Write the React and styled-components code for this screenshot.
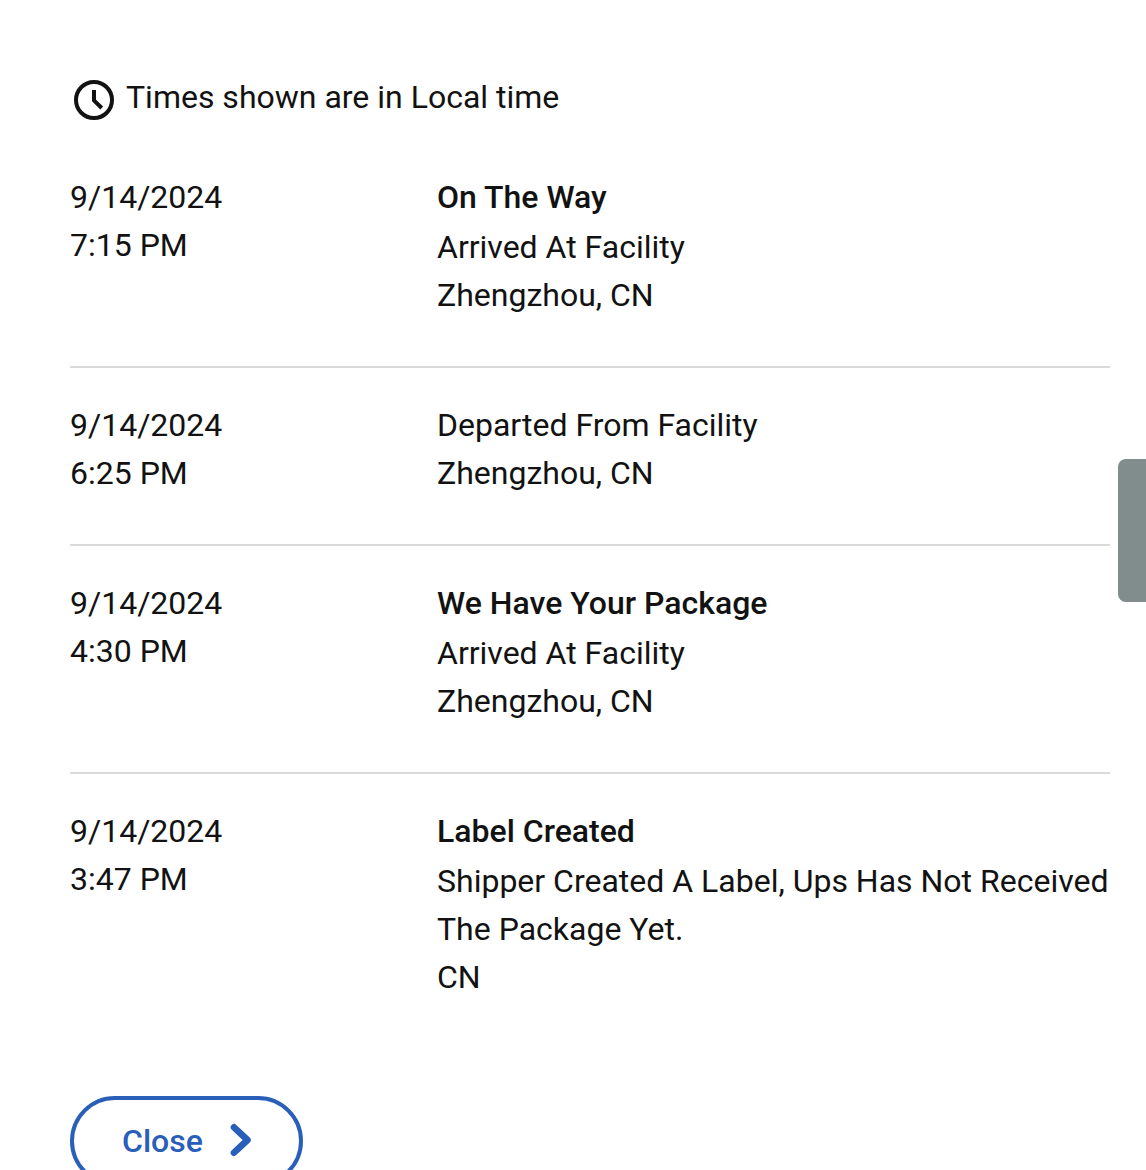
import React from "react";
import styled, { createGlobalStyle } from "styled-components";

const GlobalStyle = createGlobalStyle`
  *, *::before, *::after {
    box-sizing: border-box;
  }
  html, body {
    margin: 0;
    background: #fff;
    overflow: hidden;
  }
  body {
    color: #121212;
    font-family: Roboto, "Liberation Sans", sans-serif;
    font-size: 32px;
    line-height: 48px;
  }
`;

const Page = styled.main`
  padding: 70px 36px 0 70px;
`;

const TimeNote = styled.p`
  display: flex;
  align-items: center;
  gap: 8px;
  margin: 0 0 16px;
`;

const ClockIcon = styled.svg`
  flex: none;
  width: 48px;
  height: 48px;
  margin-top: 6px;
`;

const Table = styled.table`
  width: 100%;
  border-collapse: collapse;
`;

const Row = styled.tr`
  border-bottom: ${(p) => (p.$last ? "none" : "2px solid #dbdad8")};
`;

const Cell = styled.td`
  padding: 33px 0 47px;
  vertical-align: top;
  text-align: left;
`;

const DateCell = styled(Cell)`
  width: 367px;
`;

const Status = styled.strong`
  display: block;
  padding-bottom: 2px;
  font-weight: 500;
`;

const Line = styled.span`
  display: block;
`;

const CloseButton = styled.button`
  display: inline-flex;
  align-items: center;
  gap: 24px;
  height: 90px;
  margin-top: 48px;
  padding: 0 44px 0 48px;
  border: 4px solid #2a5fb9;
  border-radius: 45px;
  background: #fff;
  color: #2a5fb9;
  font: inherit;
  font-weight: 500;
  cursor: pointer;
`;

const FeedbackTab = styled.button`
  position: fixed;
  top: 459px;
  right: 0;
  width: 28px;
  height: 143px;
  padding: 0;
  border: 0;
  border-radius: 8px 0 0 8px;
  background: #808d8c;
  cursor: pointer;
`;

const events = [
  {
    date: "9/14/2024",
    time: "7:15 PM",
    status: "On The Way",
    detail: "Arrived At Facility",
    place: "Zhengzhou, CN",
  },
  {
    date: "9/14/2024",
    time: "6:25 PM",
    detail: "Departed From Facility",
    place: "Zhengzhou, CN",
  },
  {
    date: "9/14/2024",
    time: "4:30 PM",
    status: "We Have Your Package",
    detail: "Arrived At Facility",
    place: "Zhengzhou, CN",
  },
  {
    date: "9/14/2024",
    time: "3:47 PM",
    status: "Label Created",
    detail: "Shipper Created A Label, Ups Has Not Received The Package Yet.",
    place: "CN",
  },
];

export default function App() {
  return (
    <>
      <GlobalStyle />
      <Page>
        <TimeNote>
          <ClockIcon viewBox="0 0 48 48" fill="none" stroke="#121212" strokeWidth="4" aria-hidden="true">
            <circle cx="24" cy="24" r="18" />
            <path d="M24 14v10.5l7.7 7.5" />
          </ClockIcon>
          <span>Times shown are in Local time</span>
        </TimeNote>

        <Table>
          <tbody>
            {events.map((e, i) => (
              <Row key={e.time} $last={i === events.length - 1}>
                <DateCell>
                  <Line>{e.date}</Line>
                  <Line>{e.time}</Line>
                </DateCell>
                <Cell>
                  {e.status && <Status>{e.status}</Status>}
                  <Line>{e.detail}</Line>
                  <Line>{e.place}</Line>
                </Cell>
              </Row>
            ))}
          </tbody>
        </Table>

        <CloseButton type="button">
          Close
          <svg
            width="28"
            height="36"
            viewBox="0 0 28 36"
            fill="none"
            stroke="#2a5fb9"
            strokeWidth="6.6"
            strokeLinecap="round"
            strokeLinejoin="round"
            aria-hidden="true"
          >
            <path d="M7 4.3L20.5 17L7 29.7" />
          </svg>
        </CloseButton>
      </Page>
      <FeedbackTab type="button" aria-label="Feedback" />
    </>
  );
}
